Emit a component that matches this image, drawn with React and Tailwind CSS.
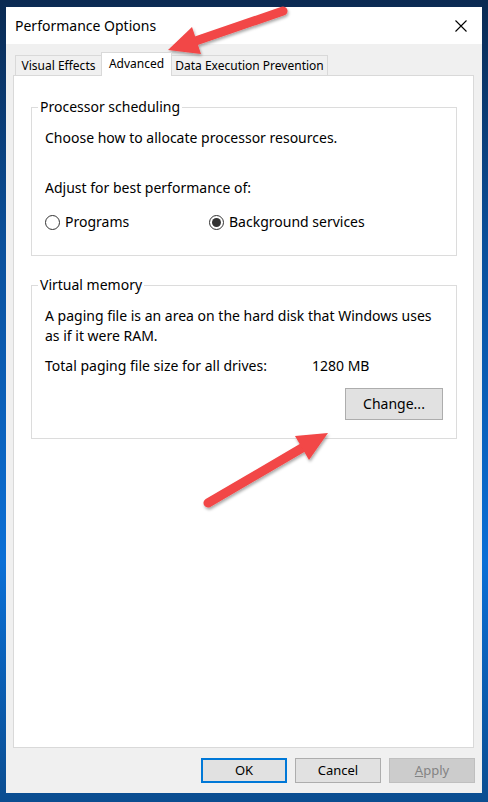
import React from "react";

const font = { fontFamily: '"Noto Sans", "Liberation Sans", sans-serif' };

function Radio({ checked, label }) {
  return (
    <div className="flex items-center h-[20px]">
      <span className="w-[15px] h-[15px] rounded-full border border-[#333333] bg-white flex items-center justify-center">
        {checked && <span className="w-[9px] h-[9px] rounded-full bg-[#333333]" />}
      </span>
      <span className="ml-[5px]">{label}</span>
    </div>
  );
}

function Group({ legend, className, children }) {
  return (
    <div className={"relative border border-[#dcdcdc] " + className}>
      <span className="absolute left-[6px] -top-[11px] px-[2px] bg-white leading-[20px]">{legend}</span>
      {children}
    </div>
  );
}

export default function App() {
  return (
    <div
      className="relative w-[488px] h-[802px] overflow-hidden bg-[linear-gradient(180deg,#0b2a52_0%,#0a4f9a_30%,#0a6fd6_70%,#0b4d90_100%)] text-[14px] text-black"
      style={font}
    >
      <div className="pt-[7px] pl-[6px]">
        <div className="w-[476px] h-[786px] bg-[#f0f0f0] flex flex-col">
          {/* title bar */}
          <div className="h-[37px] bg-white flex items-center justify-between pl-[9px] pr-[15px]">
            <span className="text-[14px] leading-[20px]">Performance Options</span>
            <svg width="12" height="12" viewBox="0 0 12 12">
              <path d="M0.5 0.5 L11.5 11.5 M11.5 0.5 L0.5 11.5" stroke="#000" strokeWidth="1.1" />
            </svg>
          </div>

          {/* tabs */}
          <div className="pl-[9px] pt-[8px] flex items-end h-[31px] text-[12px] whitespace-nowrap">
            <div className="w-[86px] h-[20px] border-l border-t border-[#d9d9d9] bg-[#f0f0f0] flex items-center justify-center leading-[18px]">
              Visual Effects
            </div>
            <div className="relative z-10 w-[71px] h-[24px] -mb-[1px] border-l border-t border-r border-[#d9d9d9] bg-white flex items-start justify-center pt-[2px] leading-[18px]">
              Advanced
            </div>
            <div className="w-[156px] h-[20px] border-t border-r border-[#d9d9d9] bg-[#f0f0f0] flex items-center justify-center leading-[18px]">
              Data Execution Prevention
            </div>
          </div>

          {/* panel */}
          <div className="ml-[7px] w-[461px] h-[673px] border border-[#d9d9d9] bg-white pt-[31px] pl-[17px] leading-[20px]">
            <Group legend="Processor scheduling" className="w-[426px] h-[149px] pl-[13px] pt-[20px]">
              <div>Choose how to allocate processor resources.</div>
              <div className="mt-[30px]">Adjust for best performance of:</div>
              <div className="mt-[14px] flex">
                <div className="w-[164px]">
                  <Radio label="Programs" />
                </div>
                <Radio checked label="Background services" />
              </div>
            </Group>

            <Group legend="Virtual memory" className="mt-[29px] w-[426px] h-[154px] pl-[13px] pr-[13px] pt-[20px]">
              <div>A paging file is an area on the hard disk that Windows uses</div>
              <div>as if it were RAM.</div>
              <div className="mt-[10px] flex">
                <span className="w-[267px]">Total paging file size for all drives:</span>
                <span>1280 MB</span>
              </div>
              <div className="mt-[12px] flex justify-end">
                <button className="w-[98px] h-[32px] bg-[#e1e1e1] border border-[#adadad] flex items-center justify-center">
                  Change...
                </button>
              </div>
            </Group>
          </div>

          {/* bottom buttons */}
          <div className="mt-[10px] pr-[7px] flex justify-end gap-[8px] text-[13px]">
            <button className="w-[86px] h-[25px] bg-[#e1e1e1] border-2 border-[#0078d7] flex items-center justify-center">
              OK
            </button>
            <button className="w-[86px] h-[25px] bg-[#e1e1e1] border border-[#adadad] flex items-center justify-center">
              Cancel
            </button>
            <button className="w-[86px] h-[25px] bg-[#cccccc] border border-[#bfbfbf] text-[#838383] flex items-center justify-center">
              <span><span className="underline">A</span>pply</span>
            </button>
          </div>
        </div>
      </div>

      {/* annotation arrows */}
      <svg className="absolute inset-0 pointer-events-none" width="488" height="802" viewBox="0 0 488 802">
        <defs>
          <filter id="sh" x="-20%" y="-20%" width="140%" height="140%">
            <feDropShadow dx="1" dy="2" stdDeviation="1.5" floodColor="#000" floodOpacity="0.35" />
          </filter>
        </defs>
        <g filter="url(#sh)" fill="#f24646" stroke="#f24646">
          <line x1="283" y1="11" x2="197" y2="40.6" strokeWidth="9" strokeLinecap="round" />
          <polygon points="168,50 201,54 192,27" stroke="none" />
          <line x1="208" y1="503" x2="302" y2="448" strokeWidth="9" strokeLinecap="round" />
          <polygon points="328,433 309,460 295,436" stroke="none" />
        </g>
      </svg>
    </div>
  );
}
